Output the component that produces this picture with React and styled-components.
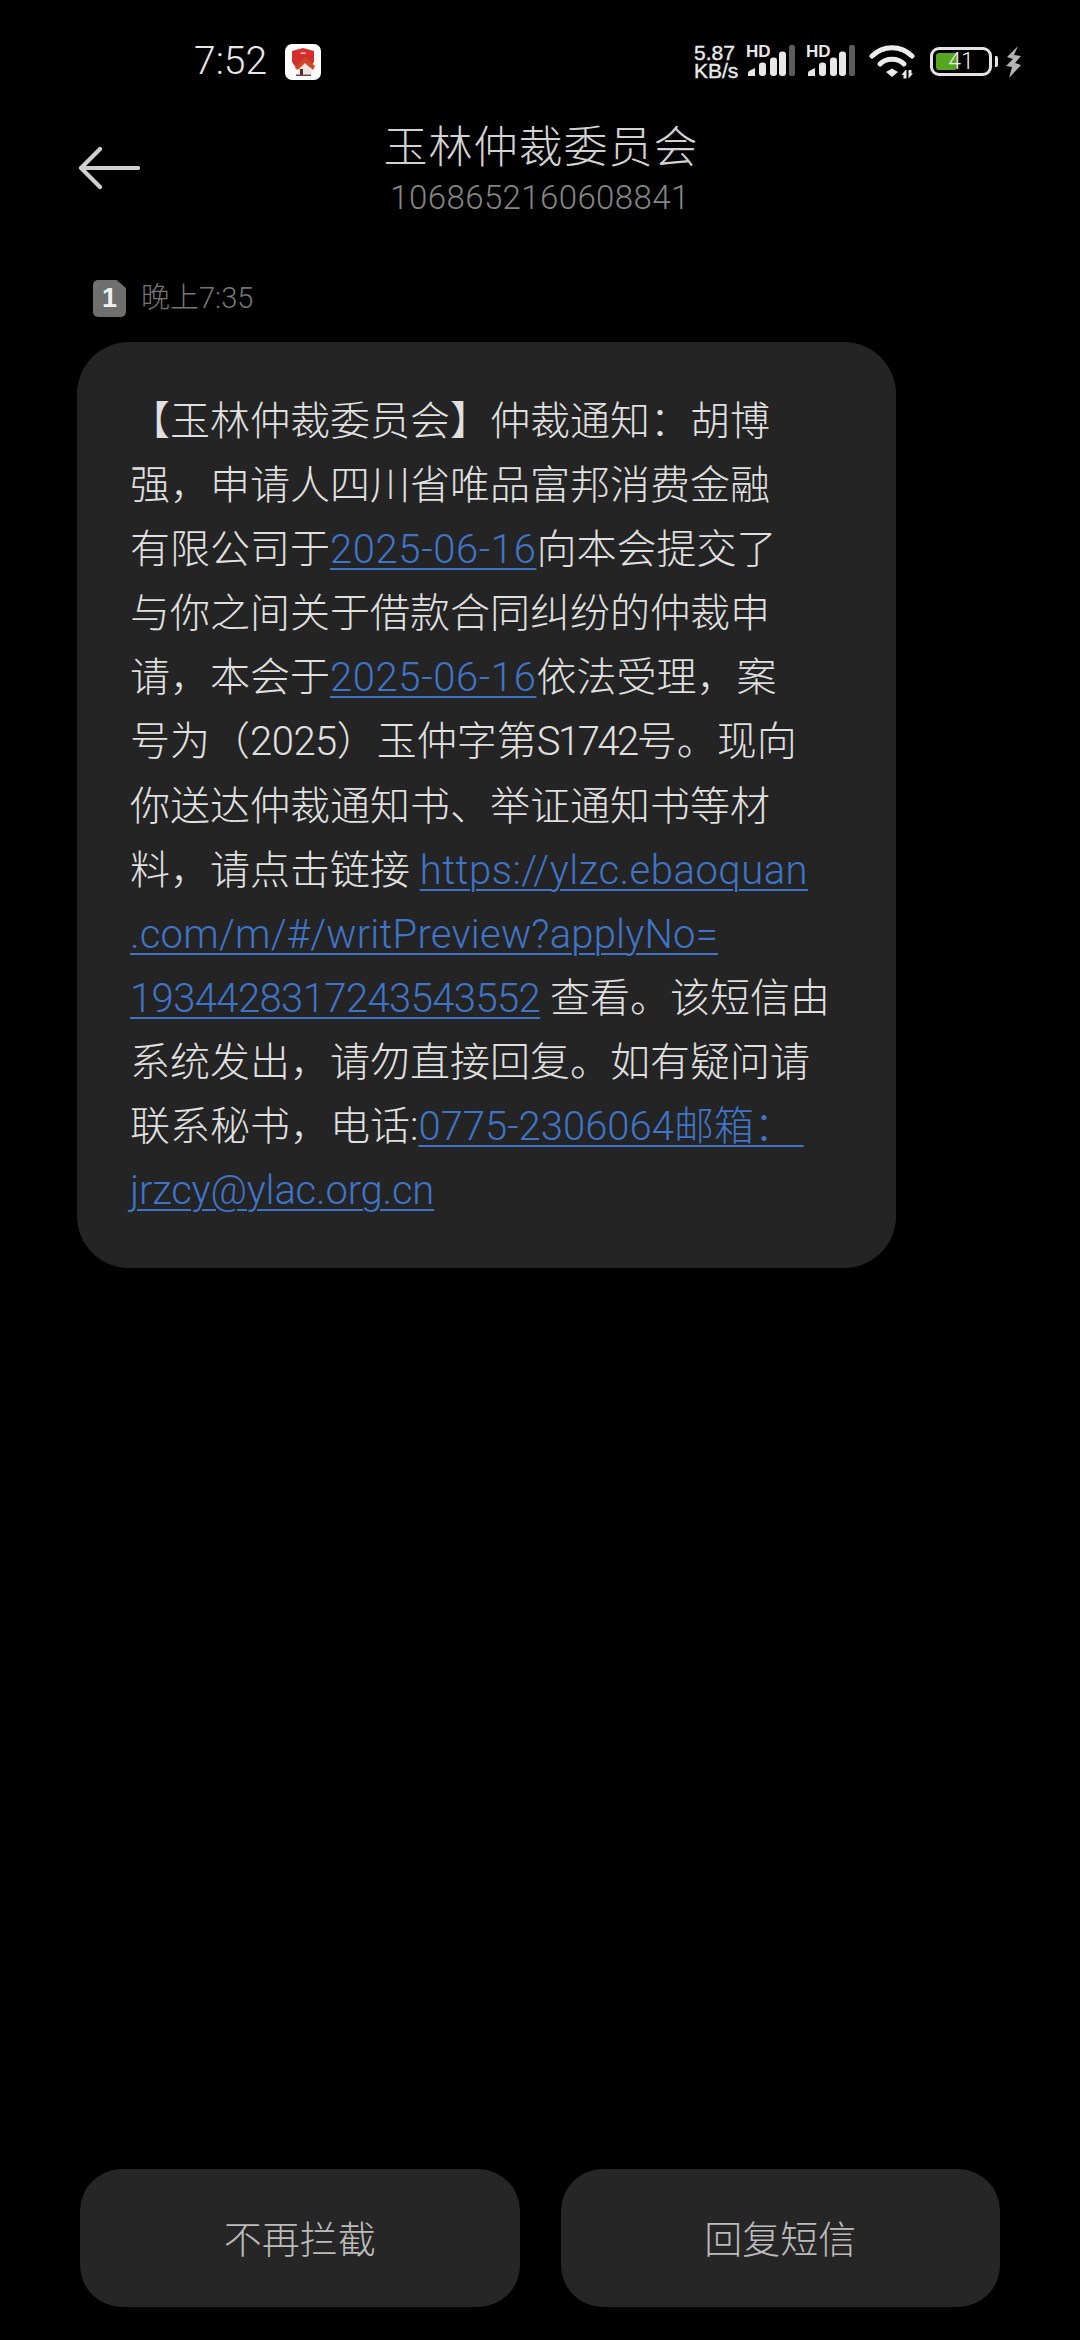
import React from "react";
import styled, { createGlobalStyle } from "styled-components";

const CJK = `"Noto Sans CJK SC", "Noto Sans", sans-serif`;
const LATIN = `Roboto, "Noto Sans CJK SC", sans-serif`;

const Global = createGlobalStyle`
  html, body { margin: 0; padding: 0; background: #000; }
  #root { width: 1080px; height: 2340px; }
`;

const Page = styled.div`
  width: 1080px;
  height: 2340px;
  background: #000;
  display: flex;
  flex-direction: column;
  box-sizing: border-box;
  font-family: ${LATIN};
  overflow: hidden;
`;

const StatusBar = styled.div`
  height: 41px;
  margin-top: 41px;
  padding: 0 58px 0 194px;
  display: flex;
  align-items: center;
  justify-content: space-between;
`;

const StatusLeft = styled.div`
  display: flex;
  align-items: center;
  gap: 18px;
`;

const Time = styled.span`
  font-size: 39px;
  font-weight: 300;
  color: #e8e8e8;
  line-height: 41px;
`;

const StatusRight = styled.div`
  display: flex;
  align-items: center;
`;

const Speed = styled.div`
  font-family: "Liberation Sans", sans-serif;
  font-size: 21px;
  font-weight: 400;
  line-height: 18px;
  color: #e8e8e8;
  width: 46px;
  margin-left: -1px;
  margin-right: 1px;
  text-align: left;
  -webkit-text-stroke: 0.4px #e8e8e8;
`;

const SignalWrap = styled.div`
  position: relative;
  width: 50px;
  height: 34px;
  margin-left: ${(p) => p.$gap}px;
`;

const Hd = styled.span`
  position: absolute;
  left: 0;
  top: 1px;
  font-family: "Liberation Sans", sans-serif;
  font-size: 17px;
  font-weight: 700;
  line-height: 12px;
  color: #e8e8e8;
`;

const Battery = styled.div`
  position: relative;
  margin-left: 15px;
  width: 62px;
  height: 29px;
  box-sizing: border-box;
  border: 3.5px solid #e4e4e4;
  border-radius: 9px;
  padding: 3px;
  display: flex;
`;

const BatteryFill = styled.div`
  height: 100%;
  border-radius: 3px;
  background: #55a81e;
`;

const BatteryLabel = styled.span`
  position: absolute;
  inset: 0;
  display: flex;
  align-items: center;
  justify-content: center;
  font-size: 23px;
  font-weight: 300;
  color: #f0f0f0;
  line-height: 1;
`;

const BatteryNub = styled.div`
  width: 3px;
  height: 11px;
  margin-left: 3px;
  border-radius: 0 2px 2px 0;
  background: #e4e4e4;
`;

const BoltIcon = styled.svg`
  margin-left: 7px;
  display: block;
`;

const Header = styled.div`
  position: relative;
  display: flex;
  flex-direction: column;
  align-items: center;
  margin-top: 35px;
`;

const BackIcon = styled.svg`
  position: absolute;
  left: 78px;
  top: 29px;
`;

const Title = styled.div`
  font-family: ${CJK};
  font-size: 44px;
  font-weight: 300;
  line-height: 54px;
  letter-spacing: 1px;
  padding-left: 2px;
  color: #d2d2d2;
`;

const Number = styled.div`
  font-size: 33px;
  font-weight: 300;
  line-height: 40px;
  letter-spacing: 0.4px;
  color: #858585;
  margin-top: 7px;
`;

const Meta = styled.div`
  display: flex;
  align-items: center;
  gap: 15px;
  margin: 62px 0 0 93px;
  height: 37px;
`;

const SimBadge = styled.div`
  width: 33px;
  height: 37px;
  box-sizing: border-box;
  background: #6f6f6f;
  border-radius: 5px;
  clip-path: polygon(0 0, 72% 0, 100% 22%, 100% 100%, 0 100%);
  display: flex;
  align-items: center;
  justify-content: center;
  font-family: "Liberation Sans", sans-serif;
  font-size: 27px;
  font-weight: 700;
  color: #f0f0f0;
`;

const Stamp = styled.span`
  font-family: ${LATIN};
  font-size: 29px;
  font-weight: 300;
  color: #767676;
  line-height: 37px;
`;

const Bubble = styled.div`
  width: 819px;
  height: 926px;
  box-sizing: border-box;
  margin: 25px 0 0 77px;
  padding: 48px 0 0 53px;
  background: #242424;
  border-radius: 52px;
`;

const Line = styled.div`
  font-family: ${LATIN};
  font-size: 40px;
  font-weight: 300;
  line-height: 64.1px;
  color: #e0e0e0;
  white-space: pre;
`;

const Link = styled.span`
  color: #3f74c8;
  text-decoration: underline;
  text-decoration-thickness: 2px;
  text-underline-offset: 5px;
  letter-spacing: ${(p) => p.$track || 0}px;
`;

const Fitted = styled.span`
  letter-spacing: ${(p) => p.$track}px;
`;

const Spacer = styled.div`
  flex: 1;
`;

const Actions = styled.div`
  display: flex;
  gap: 41px;
  padding: 0 80px;
  margin-bottom: 33px;
`;

const ActionButton = styled.div`
  flex: 1;
  height: 138px;
  box-sizing: border-box;
  padding-bottom: 4px;
  background: #262626;
  border-radius: 42px;
  display: flex;
  align-items: center;
  justify-content: center;
  font-family: ${CJK};
  font-size: 38px;
  font-weight: 300;
  color: #bcbcbc;
`;

const AppIcon = () => (
  <svg width="36" height="36" viewBox="0 0 36 36">
    <rect width="36" height="36" rx="7" fill="#fff" />
    <path d="M7 7 L18 4 L29 7 V18 L24 25 H12 L7 18 Z" fill="#d22f2c" />
    <path d="M15.5 8.5 h5 v1.5 h-5 Z" fill="#f4c9c0" />
    <path d="M10 24 L20 13 L30 22 L28 26 L20 19 L13 26 Z" fill="#c94a25" />
    <path d="M13 26 L20 19 L27 25.5 V30 H13 Z" fill="#f1e6df" />
    <path d="M15 25 h3 v6 h-3 Z" fill="#5a2a28" />
    <path d="M11 30.5 h15 v1.5 h-15 Z" fill="#6b4040" />
  </svg>
);

const SignalBars = () => (
  <svg width="50" height="34" viewBox="0 0 50 34" style={{ position: "absolute", left: 0, top: 0 }}>
    <path d="M2 28 Q2 26 4 25.5 L9 23 V31 H2 Z" fill="#e8e8e8" />
    <rect x="13" y="17.5" width="7" height="13.5" rx="3" fill="#e8e8e8" />
    <rect x="24" y="12.5" width="7" height="18.5" rx="3" fill="#e8e8e8" />
    <rect x="33" y="6.5" width="7" height="24.5" rx="3" fill="#e8e8e8" />
    <rect x="43" y="0" width="6" height="31" rx="2" fill="#5c5c5c" />
  </svg>
);

const Wifi = () => (
  <svg width="46" height="34" viewBox="0 0 46 34" style={{ marginLeft: 13, display: "block" }}>
    <g fill="none" stroke="#ececec" strokeWidth="5" strokeLinecap="round">
      <path d="M3 11 C14 0 32 0 43 11" />
      <path d="M11 19 C17 12.5 29 12.5 35 19" />
    </g>
    <path d="M17 27 L23 23.5 L29 27 L23 32 Z" fill="#ececec" />
    <path d="M36.5 25 L32.5 30 H34.5 V33.5 H37.5 V25 Z" fill="#ececec" />
    <path d="M39.5 25 V33.5 L44 28.5 H42.5 V25 Z" fill="#ececec" />
  </svg>
);

const Back = () => (
  <BackIcon width="62" height="44" viewBox="0 0 62 44">
    <path
      d="M60 22 H3 M22 3 L3 22 L22 41"
      fill="none"
      stroke="#cfcfcf"
      strokeWidth="4.2"
      strokeLinecap="round"
      strokeLinejoin="round"
    />
  </BackIcon>
);

export default function App() {
  return (
    <Page>
      <Global />
      <StatusBar>
        <StatusLeft>
          <Time>7:52</Time>
          <AppIcon />
        </StatusLeft>
        <StatusRight>
          <Speed>
            5.87
            <br />
            KB/s
          </Speed>
          <SignalWrap $gap={5}>
            <Hd>HD</Hd>
            <SignalBars />
          </SignalWrap>
          <SignalWrap $gap={10}>
            <Hd>HD</Hd>
            <SignalBars />
          </SignalWrap>
          <Wifi />
          <Battery>
            <BatteryFill style={{ width: "41%" }} />
            <BatteryLabel>41</BatteryLabel>
          </Battery>
          <BatteryNub />
          <BoltIcon width="17" height="32" viewBox="0 0 17 32">
            <path d="M13 0 L2 11 L8 13 L1 20 L7 21 L4 32 L16 19 L10 17 L16 10 L9 9 Z" fill="#b4b4b4" />
          </BoltIcon>
        </StatusRight>
      </StatusBar>

      <Header>
        <Back />
        <Title>玉林仲裁委员会</Title>
        <Number>1068652160608841</Number>
      </Header>

      <Meta>
        <SimBadge>1</SimBadge>
        <Stamp>晚上7:35</Stamp>
      </Meta>

      <Bubble>
        <Line>【玉林仲裁委员会】仲裁通知：胡博</Line>
        <Line>强，申请人四川省唯品富邦消费金融</Line>
        <Line>
          有限公司于<Link $track={0.6}>2025-06-16</Link>向本会提交了
        </Line>
        <Line>与你之间关于借款合同纠纷的仲裁申</Line>
        <Line>
          请，本会于<Link $track={0.6}>2025-06-16</Link>依法受理，案
        </Line>
        <Line>
          号为（<Fitted $track={-0.5}>2025</Fitted>）玉仲字第<Fitted $track={-2.5}>S1742</Fitted>号。现向
        </Line>
        <Line>你送达仲裁通知书、举证通知书等材</Line>
        <Line>
          料，请点击链接 <Link $track={0.5}>https://ylzc.ebaoquan</Link>
        </Line>
        <Line>
          <Link $track={0.2}>.com/m/#/writPreview?applyNo=</Link>
        </Line>
        <Line>
          <Link $track={-0.6}>1934428317243543552</Link> 查看。该短信由
        </Line>
        <Line>系统发出，请勿直接回复。如有疑问请</Line>
        <Line>
          联系秘书，电话:<Link>0775-2306064邮箱： </Link>
        </Line>
        <Line>
          <Link $track={-0.2}>jrzcy@ylac.org.cn</Link>
        </Line>
      </Bubble>

      <Spacer />

      <Actions>
        <ActionButton>不再拦截</ActionButton>
        <ActionButton>回复短信</ActionButton>
      </Actions>
    </Page>
  );
}
